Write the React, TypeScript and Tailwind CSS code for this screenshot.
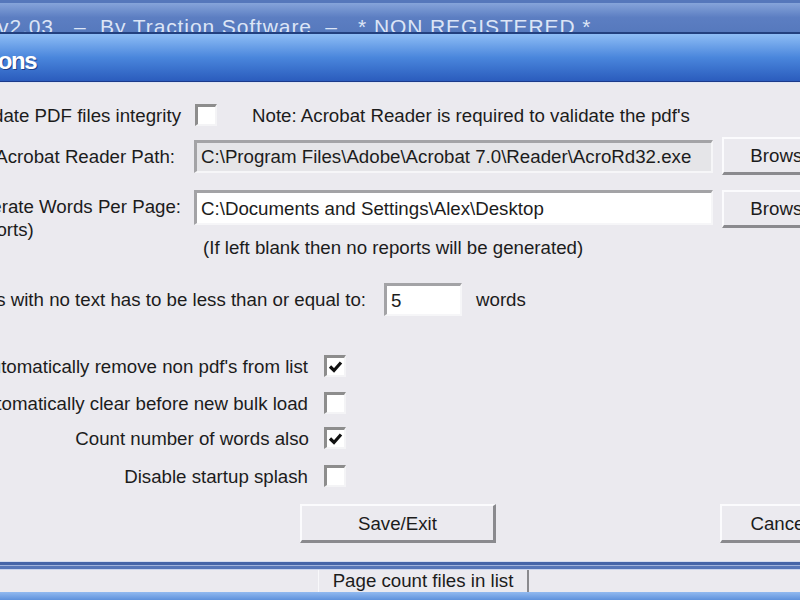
import React from 'react';

// ─── Small XP-style controls ──────────────────────────────────────────
function CheckBox({ checked = false }: { checked?: boolean }) {
  return (
    <span className="w-[22px] h-[22px] shrink-0 bg-white border-t-[3px] border-l-[3px] border-r-2 border-b-2 border-t-[#8d8d8d] border-l-[#8d8d8d] border-r-[#f4f4f6] border-b-[#f4f4f6] flex items-center justify-center">
      {checked && (
        <svg width="15" height="13" viewBox="0 0 15 13">
          <path d="M2 6.5 L6 10.5 L13 2.5" fill="none" stroke="#111" strokeWidth="3.2" />
        </svg>
      )}
    </span>
  );
}

function TextBox({ value, width, height, muted }: { value: string; width: string; height: string; muted?: boolean }) {
  return (
    <div
      className={`${width} ${height} shrink-0 flex items-center pl-[4px] overflow-hidden whitespace-nowrap border-t-[3px] border-l-[3px] border-r-2 border-b-2 border-t-[#a3a3a6] border-l-[#a3a3a6] border-r-[#f6f6f8] border-b-[#f6f6f8] ${
        muted ? 'bg-[#e5e5e8]' : 'bg-white'
      }`}
    >
      {value}
    </div>
  );
}

function XpButton({ label, width, height }: { label: string; width: string; height: string }) {
  return (
    <div
      className={`${width} ${height} shrink-0 flex items-center justify-center whitespace-nowrap bg-[#ebeaef] border-t-2 border-l-2 border-r-[3px] border-b-[3px] border-t-[#fbfbfd] border-l-[#fbfbfd] border-r-[#8a8a8e] border-b-[#8a8a8e]`}
    >
      {label}
    </div>
  );
}

// right-edge anchored label: overflow runs off to the left
function Label({ width, children }: { width: string; children: React.ReactNode }) {
  return <div className={`${width} shrink-0 flex justify-end whitespace-nowrap`}>{children}</div>;
}

// ─── Main ─────────────────────────────────────────────────────────────
export default function App() {
  return (
    <div className="w-[800px] h-[600px] overflow-hidden flex flex-col bg-[#ebeaef] text-[#1c1c1c] text-[18.7px] leading-[23px] font-['Liberation_Sans',Arial,sans-serif]">
      {/* background window title */}
      <div className="h-[32px] shrink-0 overflow-hidden bg-[#5577bb] pt-[3px]">
        <div className="h-[29px] overflow-hidden bg-gradient-to-b from-[#86a4da] via-[#5c7ec2] to-[#5679bd]">
          <div className="pt-[13px] -ml-[2px] whitespace-nowrap text-[21px] leading-[21px] text-[#dce5f6] tracking-[0.9px]">
            v2.03&nbsp;&nbsp; –&nbsp; By Traction Software&nbsp; –&nbsp;&nbsp; * NON REGISTERED *
          </div>
        </div>
      </div>
      <div className="h-[2px] shrink-0 bg-[#22407f]" />

      {/* dialog title bar */}
      <div className="h-[47px] shrink-0 flex items-center pt-[6px] bg-gradient-to-b from-[#8ebdf5] via-[#4a86dc] to-[#2b5cbd]">
        <div className="w-[36px] shrink-0 flex justify-end whitespace-nowrap">
          <span className="text-[24px] font-bold tracking-[-1.5px] text-white [text-shadow:1px_1px_0_#1d3f8a]">Options</span>
        </div>
      </div>
      <div className="h-px shrink-0 bg-[#1c3a8a]" />
      <div className="h-px shrink-0 bg-[#dfe5f4]" />

      {/* dialog body */}
      <div className="flex-1 flex flex-col">
        <div className="mt-[21px] h-[22px] flex items-center">
          <Label width="w-[181px]">Validate PDF files integrity</Label>
          <div className="ml-[14px]">
            <CheckBox />
          </div>
          <span className="ml-[35px] whitespace-nowrap">Note: Acrobat Reader is required to validate the pdf's</span>
        </div>

        <div className="mt-[11px] h-[38px] flex items-center">
          <Label width="w-[175px]">Acrobat Reader Path:</Label>
          <div className="ml-[19px]">
            <TextBox value="C:\Program Files\Adobe\Acrobat 7.0\Reader\AcroRd32.exe" width="w-[519px]" height="h-[33px]" muted />
          </div>
          <div className="ml-[9px]">
            <XpButton label="Browse" width="w-[120px]" height="h-[38px]" />
          </div>
        </div>

        <div className="mt-[15px] h-[38px] flex items-start">
          <Label width="w-[181px]">
            <div className="pt-[5px]">
              <div>Generate Words Per Page:</div>
              <div>(Reports)</div>
            </div>
          </Label>
          <div className="ml-[13px]">
            <TextBox value="C:\Documents and Settings\Alex\Desktop" width="w-[519px]" height="h-[35px]" />
          </div>
          <div className="ml-[9px]">
            <XpButton label="Browse" width="w-[120px]" height="h-[38px]" />
          </div>
        </div>

        <div className="mt-[8px] pl-[203px] whitespace-nowrap">(If left blank then no reports will be generated)</div>

        <div className="mt-[24px] h-[33px] flex items-center">
          <Label width="w-[366px]">Pages with no text has to be less than or equal to:</Label>
          <div className="ml-[18px]">
            <TextBox value="5" width="w-[78px]" height="h-[33px]" />
          </div>
          <span className="ml-[14px]">words</span>
        </div>

        <div className="mt-[39px] h-[22px] flex items-center">
          <Label width="w-[308px]">Automatically remove non pdf's from list</Label>
          <div className="ml-[16px]">
            <CheckBox checked />
          </div>
        </div>
        <div className="mt-[15px] h-[22px] flex items-center">
          <Label width="w-[308px]">Automatically clear before new bulk load</Label>
          <div className="ml-[16px]">
            <CheckBox />
          </div>
        </div>
        <div className="mt-[13px] h-[22px] flex items-center">
          <Label width="w-[309px]">Count number of words also</Label>
          <div className="ml-[15px]">
            <CheckBox checked />
          </div>
        </div>
        <div className="mt-[16px] h-[22px] flex items-center">
          <Label width="w-[308px]">Disable startup splash</Label>
          <div className="ml-[16px]">
            <CheckBox />
          </div>
        </div>

        <div className="mt-[17px] flex items-center">
          <div className="ml-[300px]">
            <XpButton label="Save/Exit" width="w-[196px]" height="h-[39px]" />
          </div>
          <div className="ml-[224px]">
            <XpButton label="Cancel" width="w-[120px]" height="h-[39px]" />
          </div>
        </div>
      </div>

      {/* dialog bottom frame */}
      <div className="h-px shrink-0 bg-[#d3dbef]" />
      <div className="h-[3px] shrink-0 bg-[#4565a8]" />
      <div className="h-px shrink-0 bg-[#9fb3dc]" />
      <div className="h-[3px] shrink-0 bg-[#5676b8]" />
      <div className="h-px shrink-0 bg-[#c9d4ee]" />

      {/* main window strip below */}
      <div className="h-[22px] shrink-0 flex overflow-hidden">
        <div className="ml-[318px] w-[211px] border-l border-l-[#f8f8fa] border-r-2 border-r-[#8a8a8e] flex justify-center">
          <span className="-mt-[1px] whitespace-nowrap">Page count files in list</span>
        </div>
      </div>
      <div className="h-[8px] shrink-0 bg-gradient-to-b from-[#92baf0] to-[#5f92dc]" />
    </div>
  );
}
